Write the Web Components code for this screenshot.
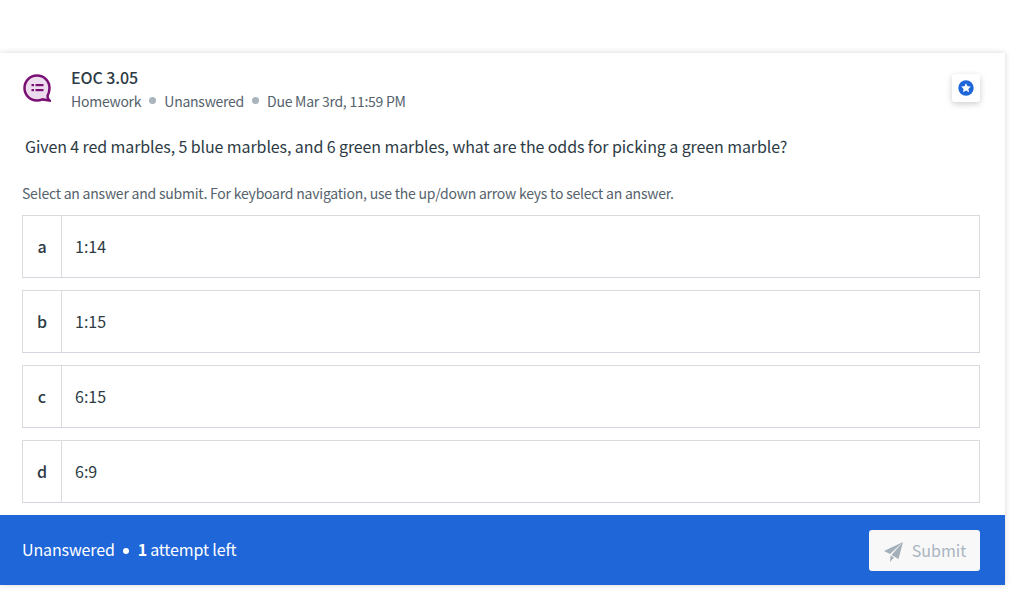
<!DOCTYPE html>
<html lang="en">
<head>
<meta charset="utf-8">
<title>EOC 3.05</title>
<style>
    html, body { margin: 0; background: #fff; }
    body {
        font-family: "Noto Sans CJK SC", "Noto Sans", sans-serif;
        color: #2d3b45;
        height: 598px;
        overflow: hidden;
    }
</style>
</head>
<body>
<question-card>
    <question-header slot="header" title="EOC 3.05" meta="Homework|Unanswered|Due Mar 3rd, 11:59 PM"></question-header>
    <p slot="prompt">Given 4 red marbles, 5 blue marbles, and 6 green marbles, what are the odds for picking a green marble?</p>
    <span slot="hint">Select an answer and submit. For keyboard navigation, use the up/down arrow keys to select an answer.</span>
    <answer-option letter="a">1:14</answer-option>
    <answer-option letter="b">1:15</answer-option>
    <answer-option letter="c">6:15</answer-option>
    <answer-option letter="d">6:9</answer-option>
    <submit-bar slot="footer"></submit-bar>
</question-card>

<script>
// Card shell: header, prompt, hint, the answers, then the blue bar
class QuestionCard extends HTMLElement {
    constructor() {
        super();
        this.attachShadow({ mode: 'open' });
        this.shadowRoot.innerHTML = `
            <style>
                :host {
                    display: block;
                    width: 1005px;
                    margin-top: 53px;
                    background: #fff;
                    box-shadow: 0 0 6px rgba(0, 0, 0, 0.16);
                }
                .body {
                    padding: 14px 25px 12px 22px;
                }
                .top {
                    position: relative;
                }
                ::slotted(p) {
                    margin: 21px 0 0 3px;
                    font-size: 16px;
                    letter-spacing: -0.1px;
                    line-height: 26px;
                    color: #2d3b45;
                }
                .hint {
                    margin-top: 23px;
                    font-size: 14px;
                    letter-spacing: -0.22px;
                    line-height: 22px;
                    color: #55626c;
                }
                .answers {
                    display: flex;
                    flex-direction: column;
                    gap: 12px;
                    margin-top: 11px;
                }
                .star {
                    position: absolute;
                    top: 7px;
                    right: 0;
                    width: 28px;
                    height: 28px;
                    display: flex;
                    align-items: center;
                    justify-content: center;
                    background: #fff;
                    border-radius: 3px;
                    box-shadow: 0 2px 6px rgba(0, 0, 0, 0.2);
                }
            </style>
            <div class="body">
                <div class="top">
                    <slot name="header"></slot>
                    <div class="star">
                        <svg width="16" height="16" viewBox="0 0 16 16">
                            <circle cx="8" cy="8" r="7.7" fill="#1f66d9"/>
                            <path d="M8 3.200l1.500 3 3.300.4-2.400 2.300.6 3.300L8 10.600l-3 1.600.6-3.300-2.400-2.300 3.300-.4z" fill="#fff"/>
                        </svg>
                    </div>
                </div>
                <slot name="prompt"></slot>
                <div class="hint"><slot name="hint"></slot></div>
                <div class="answers"><slot></slot></div>
            </div>
            <slot name="footer"></slot>
        `;
    }
}

class QuestionHeader extends HTMLElement {
    constructor() {
        super();
        this.attachShadow({ mode: 'open' });
    }

    connectedCallback() {
        const title = this.getAttribute('title') || '';
        const meta = (this.getAttribute('meta') || '').split('|');
        const parts = meta.map(m => `<span>${m}</span>`).join('<i></i>');
        this.shadowRoot.innerHTML = `
            <style>
                :host {
                    display: flex;
                    align-items: flex-start;
                    gap: 20px;
                }
                svg {
                    flex: none;
                    margin: 7px 0 0 1px;
                }
                h2 {
                    margin: 0;
                    font-size: 16px;
                    font-weight: 500;
                    letter-spacing: -0.1px;
                    line-height: 20px;
                    color: #2d3b45;
                }
                .meta {
                    display: flex;
                    align-items: center;
                    gap: 8px;
                    margin-top: 3px;
                    font-size: 14px;
                    letter-spacing: -0.25px;
                    line-height: 22px;
                    color: #55626c;
                }
                i {
                    width: 7px;
                    height: 7px;
                    margin-top: -1px;
                    border-radius: 50%;
                    background: #a9b4bd;
                }
            </style>
            <svg width="28" height="28" viewBox="0 0 28 28">
                <path d="M14 1.500C7 1.500 1.500 7 1.500 14S7 26.500 14 26.500c1.900 0 3.700-.4 5.300-1.100l7.200 1.100c-1.400-1.200-2-2.600-2-4.400C25.500 20 26.500 17 26.500 14 26.500 7 21 1.500 14 1.500z" fill="#ecdcee" stroke="#7a0f73" stroke-width="2.500"/>
                <rect x="8.500" y="10" width="2.500" height="2.200" fill="#7a0f73"/>
                <rect x="8.500" y="15" width="2.500" height="2.200" fill="#7a0f73"/>
                <rect x="12.500" y="10" width="8" height="2.200" fill="#7a0f73"/>
                <rect x="12.500" y="15" width="8" height="2.200" fill="#7a0f73"/>
            </svg>
            <div>
                <h2>${title}</h2>
                <div class="meta">${parts}</div>
            </div>
        `;
    }
}

class AnswerOption extends HTMLElement {
    constructor() {
        super();
        this.attachShadow({ mode: 'open' });
    }

    connectedCallback() {
        this.shadowRoot.innerHTML = `
            <style>
                :host {
                    display: flex;
                    height: 63px;
                    box-sizing: border-box;
                    border: 1px solid #d9dbdf;
                    border-bottom-color: #d3d6de;
                    font-size: 16px;
                    line-height: 20px;
                    color: #2d3b45;
                    background: #fff;
                }
                .letter {
                    flex: none;
                    width: 39px;
                    display: flex;
                    align-items: center;
                    justify-content: center;
                    padding-bottom: 2px;
                    box-sizing: border-box;
                    border-right: 1px solid #d9dbdf;
                    font-weight: 500;
                }
                .text {
                    display: flex;
                    align-items: center;
                    padding: 0 0 2px 13px;
                }
            </style>
            <div class="letter">${this.getAttribute('letter') || ''}</div>
            <div class="text"><slot></slot></div>
        `;
    }
}

class SubmitBar extends HTMLElement {
    constructor() {
        super();
        this.attachShadow({ mode: 'open' });
        this.shadowRoot.innerHTML = `
            <style>
                :host {
                    display: flex;
                    align-items: center;
                    justify-content: space-between;
                    height: 70px;
                    padding: 0 25px 0 22px;
                    background: #1f66d9;
                    color: #fff;
                    font-size: 16px;
                    line-height: 20px;
                }
                .status {
                    display: flex;
                    align-items: center;
                    padding-bottom: 2px;
                    letter-spacing: -0.12px;
                }
                .dot {
                    width: 6px;
                    height: 6px;
                    margin: 3px 9px 0 8px;
                    border-radius: 50%;
                    background: #fff;
                }
                b { font-weight: 700; margin-right: 3px; }
                button {
                    display: flex;
                    align-items: center;
                    justify-content: center;
                    gap: 9px;
                    width: 111px;
                    height: 41px;
                    padding: 0 0 0 1px;
                    border: 0;
                    border-radius: 3px;
                    background: #f8f8f9;
                    color: #a9b4bf;
                    font: inherit;
                    font-size: 16px;
                }
                svg { margin-top: 3px; }
            </style>
            <div class="status">
                <span>Unanswered</span><span class="dot"></span><b>1</b><span>attempt left</span>
            </div>
            <button disabled>
                <svg width="19" height="20" viewBox="0 0 19 20">
                    <path d="M19 0L0 9l6 3zM19 0L7.500 13l7 4zM6.500 13.500L6 20l4-4.500z" fill="#a3afb9"/>
                </svg>
                <span>Submit</span>
            </button>
        `;
    }
}

customElements.define('question-card', QuestionCard);
customElements.define('question-header', QuestionHeader);
customElements.define('answer-option', AnswerOption);
customElements.define('submit-bar', SubmitBar);
</script>
</body>
</html>
